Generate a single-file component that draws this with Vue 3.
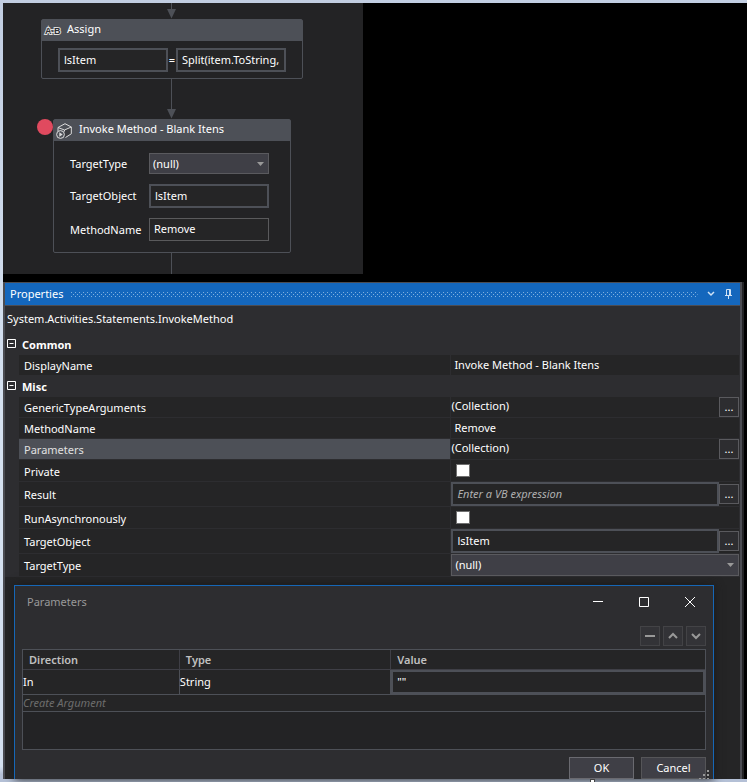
<script setup>
import { ref } from 'vue'

const assignTo = ref('lsItem')
const assignValue = ref('Split(item.ToString,')
const targetObject = ref('lsItem')
const methodName = ref('Remove')
const argumentValue = ref('""')

const misc = [
  { name: 'GenericTypeArguments', kind: 'collection' },
  { name: 'MethodName', kind: 'text' },
  { name: 'Parameters', kind: 'collection', selected: true },
  { name: 'Private', kind: 'check' },
  { name: 'Result', kind: 'expression', value: '' },
  { name: 'RunAsynchronously', kind: 'check' },
  { name: 'TargetObject', kind: 'expression', value: 'lsItem' },
  { name: 'TargetType', kind: 'select' },
]
</script>

<template>
  <div class="page">
    <main class="screen">
      <section class="designer" aria-label="Workflow">
        <svg class="link link-top" viewBox="0 0 10 16" aria-hidden="true">
          <path class="line" d="M4.5 0v8" />
          <path class="head" d="M0 6h9L4.5 15.5z" />
        </svg>

        <article class="card">
          <header class="card-head">
            <svg class="ab-icon" viewBox="0 0 17 12" aria-hidden="true">
              <text x="1" y="9">A</text>
              <text x="10" y="9">B</text>
              <path class="sign-edge" d="M6.500 4.500h4M6.500 7.500h4" />
            </svg>
            <span>Assign</span>
          </header>
          <div class="assign-body">
            <input v-model="assignTo" class="expr" type="text" aria-label="To">
            <span class="equals">=</span>
            <input v-model="assignValue" class="expr" type="text" aria-label="Value">
          </div>
        </article>

        <svg class="link link-mid" viewBox="0 0 10 40" aria-hidden="true">
          <path class="line" d="M4.5 0v32" />
          <path class="head" d="M0 30h9L4.5 39.5z" />
        </svg>

        <article class="card">
          <span class="breakpoint" aria-hidden="true"></span>
          <header class="card-head invoke-head">
            <svg class="cube-icon" viewBox="0 0 16 16" aria-hidden="true">
              <path class="face" d="M2 4.5 8.5 7 15 4v7l-6.500 3.500V7z" />
              <path d="M2 8V4.5L9 .7 15.300 4v6.800L9.500 14.500M2 4.5 8.500 7 15.300 4M8.500 7v1.500" />
              <circle cx="4.500" cy="11.500" r="3.900" />
              <path class="play" d="M3.300 9.300v4.400l3.400-2.200z" />
            </svg>
            <span>Invoke Method - Blank Itens</span>
          </header>
          <div class="invoke-body">
            <label for="d-type">TargetType</label>
            <span class="picker">
              <select id="d-type"><option>(null)</option></select>
              <svg class="caret" viewBox="0 0 7 4" aria-hidden="true"><path d="M0 0h7L3.5 4z" /></svg>
            </span>
            <label for="d-object">TargetObject</label>
            <input id="d-object" v-model="targetObject" class="expr" type="text">
            <label for="d-method">MethodName</label>
            <input id="d-method" v-model="methodName" class="plain" type="text">
          </div>
        </article>

        <svg class="link link-end" viewBox="0 0 10 21" aria-hidden="true">
          <path class="line" d="M4.5 0v21" />
        </svg>
      </section>

      <section class="properties" aria-label="Properties">
        <header class="titlebar">
          <h2>Properties</h2>
          <svg class="dots" aria-hidden="true">
            <defs>
              <pattern id="grip-dots" width="4" height="4" patternUnits="userSpaceOnUse">
                <rect width="1" height="1" /><rect x="2" y="2" width="1" height="1" />
              </pattern>
            </defs>
            <rect width="100%" height="5" fill="url(#grip-dots)" />
          </svg>
          <button class="bar-button" type="button" aria-label="Window position">
            <svg width="8" height="6" viewBox="0 0 8 6"><path d="M1 1l3 3 3-3" stroke-width="1.5" /></svg>
          </button>
          <button class="bar-button" type="button" aria-label="Auto hide">
            <svg width="8" height="10" viewBox="0 0 8 10"><path d="M1.5 6V.5h4V6M0 6.5h7M3.5 7v3" /><path d="M5 1v5" stroke-width="2" /></svg>
          </button>
        </header>
        <p class="type-name">System.Activities.Statements.InvokeMethod</p>

        <div class="grid">
          <h3 class="group">
            <svg viewBox="0 0 9 9" aria-hidden="true"><path d="M.5.5h8v8h-8zM2.5 4.5h4" /></svg>Common
          </h3>
          <label class="name" for="p-display">DisplayName</label>
          <div class="value"><input id="p-display" class="bare" type="text" value="Invoke Method - Blank Itens"></div>

          <h3 class="group">
            <svg viewBox="0 0 9 9" aria-hidden="true"><path d="M.5.5h8v8h-8zM2.5 4.5h4" /></svg>Misc
          </h3>
          <template v-for="row in misc" :key="row.name">
            <label class="name" :class="[row.kind, { selected: row.selected }]" :for="'p-' + row.name">{{ row.name }}</label>
            <div class="value" :class="row.kind">
              <template v-if="row.kind === 'collection'">
                <span class="collection-text">(Collection)</span>
                <button :id="'p-' + row.name" class="more" type="button">...</button>
              </template>
              <input v-else-if="row.kind === 'text'" :id="'p-' + row.name" v-model="methodName" class="bare" type="text">
              <input v-else-if="row.kind === 'check'" :id="'p-' + row.name" class="box" type="checkbox">
              <template v-else-if="row.kind === 'expression'">
                <input :id="'p-' + row.name" class="expr" type="text" :value="row.value" placeholder="Enter a VB expression">
                <button class="more" type="button" :aria-label="'Edit ' + row.name">...</button>
              </template>
              <span v-else class="picker">
                <select :id="'p-' + row.name"><option>(null)</option></select>
                <svg class="caret" viewBox="0 0 7 4" aria-hidden="true"><path d="M0 0h7L3.5 4z" /></svg>
              </span>
            </div>
          </template>
        </div>

        <section class="dialog" role="dialog" aria-labelledby="dialog-title">
          <header class="dialog-head">
            <h2 id="dialog-title">Parameters</h2>
            <button type="button" aria-label="Minimize"><svg viewBox="0 0 12 12"><path d="M1 5.5h10" /></svg></button>
            <button type="button" aria-label="Maximize"><svg viewBox="0 0 12 12"><path d="M1.5 1.5h9v9h-9z" /></svg></button>
            <button type="button" aria-label="Close"><svg viewBox="0 0 12 12"><path d="M1 1l10 10M11 1L1 11" /></svg></button>
          </header>
          <div class="tools">
            <button type="button" aria-label="Remove"><svg viewBox="0 0 10 10"><path d="M0 5h10" /></svg></button>
            <button type="button" aria-label="Move up"><svg viewBox="0 0 10 10"><path d="M1 7l4-4 4 4" /></svg></button>
            <button type="button" aria-label="Move down"><svg viewBox="0 0 10 10"><path d="M1 3l4 4 4-4" /></svg></button>
          </div>
          <div class="table-frame">
            <table>
              <thead>
                <tr><th class="direction">Direction</th><th class="kind">Type</th><th>Value</th></tr>
              </thead>
              <tbody>
                <tr class="argument">
                  <td>In</td>
                  <td>String</td>
                  <td><input v-model="argumentValue" class="expr" type="text" aria-label="Value"></td>
                </tr>
                <tr class="create"><td colspan="3">Create Argument</td></tr>
              </tbody>
            </table>
          </div>
          <footer class="actions">
            <button class="ok" type="button">OK</button>
            <button type="button">Cancel</button>
            <svg class="grip" viewBox="0 0 10 9" aria-hidden="true">
              <path d="M8 0h2v2H8zM4 4h2v2H4zM8 4h2v2H8zM0 8h2v1H0zM4 8h2v1H4zM8 8h2v1H8z" />
            </svg>
          </footer>
        </section>
      </section>
    </main>
    <span class="handle" aria-hidden="true"></span>
  </div>
</template>

<style>
body {
  margin: 0;
  background: #b4c0d6;
}
</style>

<style scoped>
.page {
  position: relative;
  padding: 3px 0 3px 3px;
  background: linear-gradient(#c2cee2, #d5e1f0 50%, #d5e1f0 98%, #b4c0d6 99%);
  color: #fff;
  font: 11px/16px "Noto Sans", "Open Sans", sans-serif;
}

.page *,
.page *::before {
  box-sizing: border-box;
}

.screen {
  background: #000;
}

h2,
h3,
p {
  margin: 0;
  font-size: 11px;
  font-weight: 400;
}

button,
input,
select {
  margin: 0;
  border-radius: 0;
  color: inherit;
  font: inherit;
}

button {
  display: grid;
  place-items: center;
  padding: 0;
  border: 0;
  background: none;
}

svg {
  display: block;
  flex: none;
}

/* Workflow designer */
.designer {
  display: flex;
  flex-direction: column;
  align-items: center;
  width: fit-content;
  padding: 0 60px 0 38px;
  background: #232325;
}

.link {
  width: 10px;
}

.link-top {
  height: 16px;
}

.link-mid {
  height: 40px;
}

.link-end {
  height: 21px;
}

.line {
  stroke: #4d5057;
}

.head {
  fill: #4d5057;
}

.card {
  position: relative;
  border: 1px solid #4d5057;
  border-radius: 2px;
}

.card-head {
  display: flex;
  align-items: center;
  gap: 6px;
  height: 21px;
  padding: 0 2px;
  background: #4d5057;
}

.card-head span {
  padding-bottom: 4px;
}

.invoke-head {
  gap: 7px;
}

.ab-icon {
  width: 17px;
  height: 12px;
  overflow: visible;
}

.ab-icon text {
  fill: #2d2d30;
  stroke: #dcdcdc;
  stroke-width: 2px;
  paint-order: stroke;
  font: 700 9px "Liberation Sans", sans-serif;
}

.sign-edge {
  stroke: #dcdcdc;
}

.cube-icon {
  width: 16px;
  height: 16px;
  fill: none;
  stroke: #dcdcdc;
}

.face {
  fill: #3a3b3f;
  stroke: none;
}

.play {
  fill: #dcdcdc;
  stroke: none;
}

.assign-body {
  display: flex;
  align-items: center;
  padding: 7px 16px 6px;
}

.assign-body .expr {
  width: 110px;
}

.equals {
  width: 8px;
  text-align: center;
}

.expr {
  width: 100%;
  height: 24px;
  padding: 0 4px 2px;
  border: 2px solid #4d5057;
  background: #252526;
}

.plain {
  height: 23px;
  padding: 0 4px 2px;
  border: 1px solid #5a5a5c;
  background: #252526;
}

.breakpoint {
  position: absolute;
  top: -1px;
  left: -17px;
  width: 16px;
  height: 16px;
  border-radius: 50%;
  background: #e04a5f;
}

.invoke-body {
  display: grid;
  grid-template-columns: 79px 120px;
  row-gap: 10px;
  align-items: center;
  padding: 12px 21px 11px 16px;
}

.invoke-body .plain {
  width: 100%;
}

.picker {
  display: grid;
  flex: 1;
  grid-template-columns: 1fr 12px;
  align-items: center;
}

.picker select {
  grid-area: 1 / 1 / 2 / 3;
  width: 100%;
  height: 21px;
  padding: 0 3px;
  border: 1px solid #5a5a5e;
  background: #3f3f46;
  appearance: none;
}

.caret {
  grid-area: 1 / 2;
  width: 7px;
  height: 4px;
  fill: #999;
  pointer-events: none;
}

/* Properties panel */
.properties {
  margin: 8px 5px 0 0;
  border: solid #4b4c52;
  border-width: 1px 2px 0;
  background: #252526;
  box-shadow: 2px 0 #232325;
}

.titlebar {
  display: flex;
  align-items: center;
  gap: 8px;
  height: 23px;
  padding: 0 6px 0 5px;
  border-bottom: 1px solid #4b4c52;
  background: #1467bd;
}

.dots {
  flex: 1;
  width: 0;
  height: 5px;
}

.dots pattern rect {
  fill: #7fb0e0;
}

.bar-button {
  width: 10px;
  height: 16px;
}

.bar-button svg {
  fill: none;
  stroke: #cfe2f5;
}

.type-name {
  padding: 5px 2px 7px;
  background: #2d2d30;
}

.grid {
  display: grid;
  grid-template-columns: 3fr 2fr;
  column-gap: 1px;
  row-gap: 1px;
  padding: 0 1px 1px 14px;
  background: #2d2d30;
}

.group {
  display: flex;
  grid-column: 1 / 3;
  align-items: center;
  gap: 6px;
  height: 20px;
  margin-left: -12px;
  padding-top: 2px;
  font-weight: 700;
}

.group svg {
  width: 9px;
  height: 9px;
  margin-bottom: 3px;
  fill: none;
  stroke: #fff;
}

.name,
.value {
  display: flex;
  align-items: center;
  min-width: 0;
  min-height: 20px;
  background: #252526;
}

.name {
  padding: 2px 0 0 5px;
}

.name.selected {
  background: #4d5057;
  color: #e0e0e0;
}

.check {
  min-height: 21px;
}

.expression {
  min-height: 24px;
}

.bare {
  width: 100%;
  height: 18px;
  padding: 0 3px 2px;
  border: 0;
  background: none;
}

.collection-text {
  flex: 1;
  padding-bottom: 3px;
}

.more {
  flex: none;
  width: 20px;
  height: 20px;
  border: 1px solid #5a5a5e;
  background: #2d2d30;
}

.value .expr {
  flex: 1;
  width: 0;
}

.value .expr::placeholder {
  color: #b0b0b0;
  font-style: italic;
  opacity: 1;
}

.box {
  width: 14px;
  height: 13px;
  margin-left: 5px;
  border: 1px solid #707070;
  background: #fff;
  appearance: none;
}

.value .picker select {
  height: 22px;
}

/* Parameters dialog */
.dialog {
  margin: 8px 26px 0 9px;
  border: solid #1667b7;
  border-width: 1px 1px 0;
  background: #2d2d30;
  box-shadow: 0 0 9px #1a1a1a;
}

.dialog-head {
  display: flex;
  align-items: center;
  height: 33px;
  padding: 0 17px 2px 12px;
}

.dialog-head h2 {
  flex: 1;
  color: #999;
}

.dialog-head button {
  width: 12px;
  height: 12px;
  margin-left: 34px;
}

.dialog-head svg {
  width: 12px;
  height: 12px;
  fill: none;
  stroke: #fff;
}

.tools {
  display: flex;
  justify-content: flex-end;
  gap: 3px;
  padding: 7px 7px 3px;
}

.tools button {
  width: 20px;
  height: 20px;
  border: 1px solid #434346;
  background: #333337;
}

.tools svg {
  width: 10px;
  height: 10px;
  fill: none;
  stroke: #999;
  stroke-width: 2;
}

.table-frame {
  min-height: 101px;
  margin: 0 7px;
  border: 1px solid #4d5057;
  background: #232325;
}

table {
  width: 100%;
  border-spacing: 0;
  table-layout: fixed;
}

th,
td {
  padding: 0;
  border-right: 1px solid #4d5057;
  border-bottom: 1px solid #4d5057;
  background: #252526;
  text-align: left;
}

th {
  height: 20px;
  padding: 0 6px;
  border-color: #3f3f46;
  color: #c0c0c0;
  font-weight: 600;
}

th:last-child,
td:last-child {
  border-right: 0;
}

.direction {
  width: 23%;
}

.kind {
  width: 31%;
}

td .expr {
  display: block;
}

.create td {
  height: 17px;
  color: #6d6d6d;
  font-style: italic;
}

.actions {
  position: relative;
  display: flex;
  justify-content: flex-end;
  gap: 7px;
  padding: 7px 7px 0;
}

.actions button {
  width: 65px;
  height: 22px;
  border: 1px solid #555558;
  background: #3f3f46;
}

.actions .ok {
  border-color: #6a6a70;
}

.grip {
  position: absolute;
  right: 4px;
  bottom: 0;
  width: 10px;
  height: 9px;
  fill: #999;
}

.handle {
  position: absolute;
  bottom: 0;
  left: 79%;
  width: 5px;
  height: 3px;
  border: solid #444;
  border-width: 1px 1px 0;
  background: #fff;
}
</style>
